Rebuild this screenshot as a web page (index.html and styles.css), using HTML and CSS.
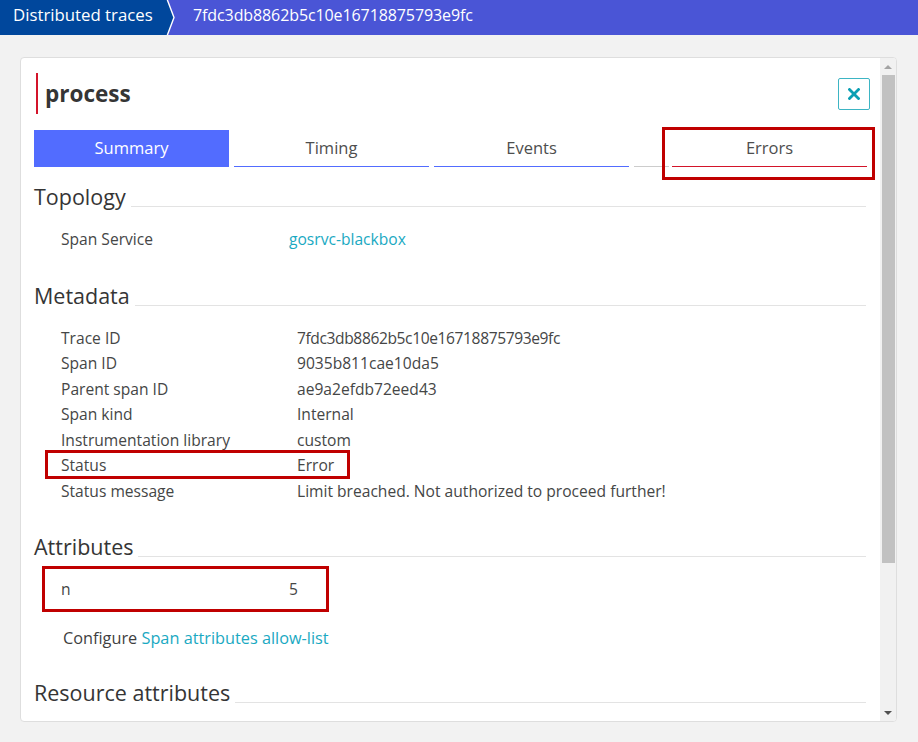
FILE: index.html
```html
<!DOCTYPE html>
<html lang="en">
<head>
<meta charset="utf-8">
<title>Distributed traces</title>
<link rel="stylesheet" href="styles.css">
</head>
<body>
<header class="crumbs">
  <div class="crumb crumb-root">Distributed traces</div>
  <svg class="chev" width="16" height="35" viewBox="0 0 16 35" aria-hidden="true">
    <polygon points="0,0 7,0 14,17.5 7,35 0,35" fill="#00479c"/>
    <polyline points="7,-1 14,17.5 7,36" fill="none" stroke="#ffffff" stroke-width="1.4"/>
  </svg>
  <div class="crumb crumb-current">7fdc3db8862b5c10e16718875793e9fc</div>
</header>
<main class="page">
  <section class="panel">
    <div class="panel-body">
      <div class="panel-head">
        <h1 class="title">process</h1>
        <button class="close" aria-label="Close">
          <svg width="12" height="12" viewBox="0 0 12 12"><path d="M1.5 1.5 L10.5 10.5 M10.5 1.5 L1.5 10.5" stroke="#0b9fb3" stroke-width="2.8" stroke-linecap="square"/></svg>
        </button>
      </div>
      <nav class="tabs">
        <div class="tab tab-active">Summary</div>
        <div class="tab">Timing</div>
        <div class="tab">Events</div>
        <div class="tab-spacer"></div>
        <div class="tab tab-error">Errors</div>
        <span class="mark mark-tab"></span>
      </nav>

      <section class="group group-first">
        <div class="group-head"><h2>Topology</h2><span class="rule"></span></div>
        <div class="rows rows-narrow">
          <div class="row"><span class="label">Span Service</span><span class="value link">gosrvc-blackbox</span></div>
        </div>
      </section>

      <section class="group">
        <div class="group-head"><h2>Metadata</h2><span class="rule"></span></div>
        <div class="rows rows-wide">
          <div class="row"><span class="label">Trace ID</span><span class="value value-hash">7fdc3db8862b5c10e16718875793e9fc</span></div>
          <div class="row"><span class="label">Span ID</span><span class="value">9035b811cae10da5</span></div>
          <div class="row"><span class="label">Parent span ID</span><span class="value">ae9a2efdb72eed43</span></div>
          <div class="row"><span class="label">Span kind</span><span class="value">Internal</span></div>
          <div class="row"><span class="label">Instrumentation library</span><span class="value">custom</span></div>
          <div class="row"><span class="label">Status</span><span class="value">Error</span><span class="mark mark-status"></span></div>
          <div class="row"><span class="label">Status message</span><span class="value">Limit breached. Not authorized to proceed further!</span></div>
        </div>
      </section>

      <section class="group">
        <div class="group-head"><h2>Attributes</h2><span class="rule"></span></div>
        <div class="rows rows-narrow">
          <div class="row"><span class="label">n</span><span class="value">5</span><span class="mark mark-attr"></span></div>
        </div>
        <p class="configure">Configure <a class="link" href="#">Span attributes allow-list</a></p>
      </section>

      <section class="group group-resource">
        <div class="group-head"><h2>Resource attributes</h2><span class="rule"></span></div>
      </section>
    </div>
    <div class="scrollbar" aria-hidden="true">
      <div class="sb-btn"><span class="tri tri-up"></span></div>
      <div class="sb-thumb"></div>
      <div class="sb-track"></div>
      <div class="sb-btn"><span class="tri tri-down"></span></div>
    </div>
  </section>
</main>
</body>
</html>
```
FILE: styles.css
```css
* { box-sizing: border-box; }

html, body {
  margin: 0;
  padding: 0;
}

body {
  width: 918px;
  height: 742px;
  overflow: hidden;
  background: #f2f2f2;
  font-family: "Open Sans", "Noto Sans", sans-serif;
  color: #454646;
}

/* breadcrumb bar */
.crumbs {
  display: flex;
  height: 35px;
  background: #4a55d6;
  color: #ffffff;
}

.crumb {
  line-height: 30px;
  white-space: nowrap;
}

.crumb-root {
  width: 160px;
  padding-left: 13px;
  background: #00479c;
  font-size: 16.8px;
}

.chev { display: block; flex: none; }

.crumb-current {
  padding-left: 17px;
  font-size: 16px;
  letter-spacing: -0.1px;
}

/* page + panel */
.page {
  padding: 22px 21px 0 20px;
}

.panel {
  display: flex;
  height: 665px;
  background: #ffffff;
  border: 1px solid #dedede;
  border-radius: 4px;
  overflow: hidden;
}

.panel-body {
  flex: 1;
  min-width: 0;
  padding: 15px 14px 0 13px;
  overflow: hidden;
}

.panel-head {
  display: flex;
  align-items: center;
  justify-content: space-between;
  height: 41px;
  margin-left: 2px;
  padding-left: 7px;
  border-left: 2px solid #d3142a;
}

.title {
  margin: 0;
  font-size: 22.5px;
  font-weight: 700;
  line-height: 41px;
  color: #353535;
}

.close {
  width: 32px;
  height: 32px;
  margin-right: -4px;
  padding: 0;
  display: flex;
  align-items: center;
  justify-content: center;
  background: #ffffff;
  border: 1px solid #3db5c4;
  border-radius: 2px;
}

.close svg { display: block; }

/* tabs */
.tabs {
  position: relative;
  display: flex;
  margin-top: 16px;
  height: 37px;
}

.tab {
  width: 195px;
  flex: none;
  height: 37px;
  line-height: 36px;
  text-align: center;
  font-size: 16.5px;
  color: #4e4e4e;
  border-bottom: 1px solid #526cff;
  margin-right: 5px;
}

.tab-active {
  background: #526cff;
  color: #ffffff;
  border-bottom-color: #526cff;
}

.tab-spacer {
  width: 35px;
  flex: none;
  border-bottom: 1px solid #cccccc;
  margin-right: 3px;
}

.tab-error {
  border-bottom-color: #d3142a;
  margin-right: 0;
}

/* red annotation frames */
.mark {
  position: absolute;
  border: 3px solid #c00000;
  pointer-events: none;
}

.mark-tab {
  left: 628px;
  top: -3px;
  width: 213px;
  height: 53px;
}

.mark-status {
  left: 11px;
  top: -2px;
  width: 305px;
  height: 29px;
}

.mark-attr {
  left: 8px;
  top: -10px;
  width: 287px;
  height: 46px;
}

/* sections */
.group { margin-top: 30px; }
.group-first { margin-top: 16px; }
.group-resource { margin-top: 28px; }

.group-head {
  display: flex;
  align-items: flex-end;
}

.group-head h2 {
  margin: 0;
  font-size: 21.5px;
  font-weight: 400;
  line-height: 28px;
  color: #353535;
  white-space: nowrap;
}

.rule {
  flex: 1;
  margin-left: 5px;
  margin-bottom: 4px;
  border-bottom: 1px solid #e3e3e3;
}

.rows { margin-top: 15px; }

.row {
  position: relative;
  display: flex;
  height: 25.5px;
  line-height: 26px;
  font-size: 15.6px;
}

.label {
  flex: none;
  padding-left: 27px;
  white-space: nowrap;
}

.rows-narrow .label { width: 255px; }
.rows-wide .label { width: 263px; }

.value { white-space: nowrap; }

.value-hash { letter-spacing: -0.4px; }

.link {
  color: #1aa9c2;
  text-decoration: none;
}

.configure {
  margin: 23px 0 0;
  padding-left: 29px;
  font-size: 16.3px;
  line-height: 26px;
  color: #3f3f3f;
}

/* faux scrollbar */
.scrollbar {
  width: 16px;
  flex: none;
  display: flex;
  flex-direction: column;
  background: #f1f1f1;
}

.sb-btn {
  height: 17px;
  flex: none;
  display: flex;
  align-items: center;
  justify-content: center;
}

.sb-thumb {
  height: 488px;
  flex: none;
  margin: 0 1px 0 2px;
  background: #c1c1c1;
}

.sb-track { flex: 1; }

.tri {
  width: 0;
  height: 0;
  border-left: 4px solid transparent;
  border-right: 4px solid transparent;
}

.tri-up { border-bottom: 4px solid #a3a3a3; }
.tri-down { border-top: 4px solid #505050; }
```
